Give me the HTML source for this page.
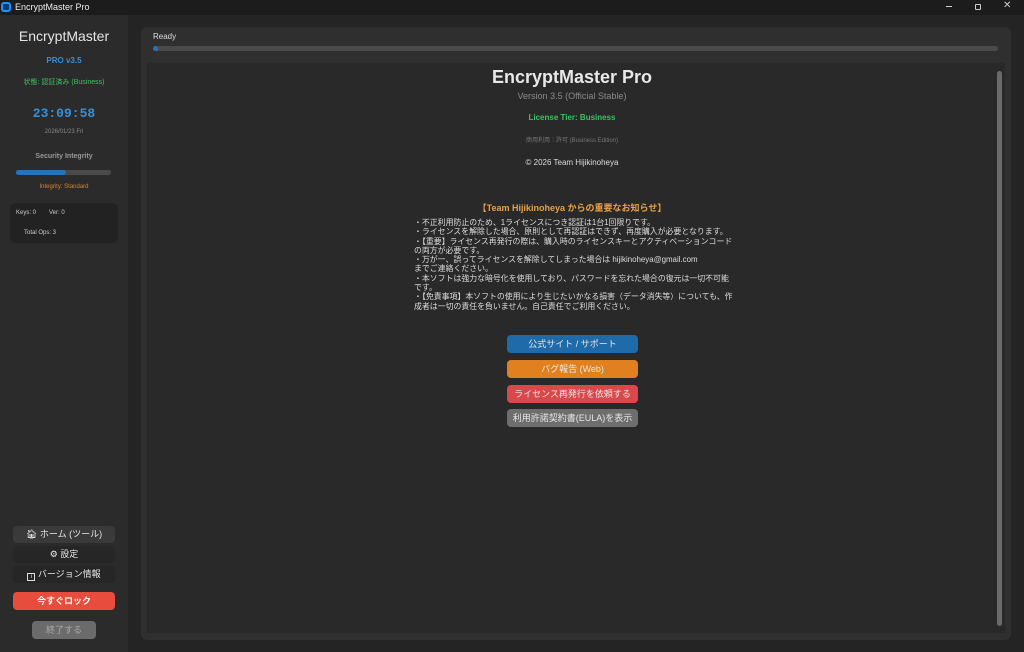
<!DOCTYPE html>
<html><head><meta charset="utf-8"><style>
*{margin:0;padding:0;box-sizing:border-box}
body{width:1024px;height:652px;background:#242424;font-family:"Liberation Sans","Noto Sans CJK JP",sans-serif;position:relative;overflow:hidden;color:#ddd}
.abs{position:absolute}
.c{text-align:center}
#tb{left:0;top:0;width:1024px;height:15px;background:#1c1c1c}
#sb{left:0;top:15px;width:128px;height:637px;background:#2b2b2b}
.btn{position:absolute;border-radius:4px;text-align:center;font-size:9px;color:#e8e8e8}
</style></head><body>
<div id="tb" class="abs">
 <div class="abs" style="left:1px;top:2px;width:10px;height:10px;border:2px solid #1e90ff;border-radius:3px;background:#0b3d6b"></div>
 <div class="abs" style="left:15px;top:2px;font-size:9px;color:#eee">EncryptMaster Pro</div>
 <div class="abs" style="left:946px;top:6px;width:6px;height:1px;background:#ccc"></div>
 <div class="abs" style="left:975px;top:4px;width:6px;height:6px;border:1.5px solid #ccc;border-radius:1px"></div>
 <div class="abs" style="left:1003px;top:0px;font-size:10px;color:#ccc">✕</div>
</div>
<div id="sb" class="abs">
 <div class="abs c" style="left:0;top:13px;width:128px;font-size:14px;color:#e6e6e6">EncryptMaster</div>
 <div class="abs c" style="left:0;top:41px;width:128px;font-size:8px;color:#3a8fd6;font-weight:bold">PRO v3.5</div>
 <div class="abs c" style="left:0;top:62px;width:128px;font-size:7px;color:#3cc35f">状態: 認証済み (Business)</div>
 <div class="abs c" style="left:0;top:91px;width:128px;font-size:13px;color:#3a8fd6;font-weight:bold;font-family:'Liberation Mono',monospace">23:09:58</div>
 <div class="abs c" style="left:0;top:114px;width:128px;font-size:6px;color:#888">2026/01/23 Fri</div>
 <div class="abs c" style="left:0;top:138px;width:128px;font-size:7px;color:#999;font-weight:bold">Security Integrity</div>
 <div class="abs" style="left:16px;top:155px;width:95px;height:5px;background:#4a4a4a;border-radius:3px"><div style="width:50px;height:5px;background:#2a72b5;border-radius:3px"></div></div>
 <div class="abs c" style="left:0;top:169px;width:128px;font-size:6px;color:#d9822b">Integrity: Standard</div>
 <div class="abs" style="left:10px;top:188px;width:108px;height:40px;background:#222;border-radius:5px;font-size:6px;color:#ccc">
  <div class="abs" style="left:6px;top:7px">Keys: 0</div><div class="abs" style="left:39px;top:7px">Ver: 0</div>
  <div class="abs" style="left:14px;top:27px">Total Ops: 3</div></div>
 <div class="btn" style="left:13px;top:511px;width:102px;height:17px;line-height:17px;background:#3a3a3a">🏠︎ ホーム (ツール)</div>
 <div class="btn" style="left:13px;top:531px;width:102px;height:17px;line-height:17px;background:#262626">⚙ 設定</div>
 <div class="btn" style="left:13px;top:551px;width:102px;height:17px;line-height:17px;background:#262626"><span style="display:inline-block;width:8px;height:8px;border:1px solid #ddd;font-size:6px;line-height:6px;vertical-align:-1px">i</span> バージョン情報</div>
 <div class="btn" style="left:13px;top:577px;width:102px;height:18px;line-height:18px;background:#e74c3c;font-weight:bold;color:#fff">今すぐロック</div>
 <div class="btn" style="left:32px;top:606px;width:64px;height:18px;line-height:18px;background:#6b6b6b;color:#aaa">終了する</div>
</div>
<div class="abs" style="left:141px;top:27px;width:870px;height:613px;background:#2f2f2f;border-radius:6px"></div>
<div class="abs" style="left:153px;top:32px;font-size:8px;color:#ddd">Ready</div>
<div class="abs" style="left:153px;top:46px;width:845px;height:5px;background:#4a4a4a;border-radius:3px"><div style="width:5px;height:5px;background:#2a72b5;border-radius:3px"></div></div>
<div class="abs" style="left:147px;top:63px;width:858px;height:570px;background:#292929"></div>
<div class="abs" style="left:997px;top:71px;width:5px;height:555px;background:#6a6a6a;border-radius:3px"></div>
<div class="abs c" style="left:147px;top:67px;width:850px;font-size:18px;font-weight:bold;color:#e8e8e8">EncryptMaster Pro</div>
<div class="abs c" style="left:147px;top:91px;width:850px;font-size:9px;color:#8a8a8a">Version 3.5 (Official Stable)</div>
<div class="abs c" style="left:147px;top:113px;width:850px;font-size:8px;color:#3cc35f;font-weight:bold">License Tier: Business</div>
<div class="abs c" style="left:147px;top:135px;width:850px;font-size:6px;color:#777">商用利用：許可 (Business Edition)</div>
<div class="abs c" style="left:147px;top:158px;width:850px;font-size:8px;color:#ddd">© 2026 Team Hijikinoheya</div>
<div class="abs c" style="left:147px;top:201px;width:850px;font-size:9px;color:#e8a04a;font-weight:bold">【Team Hijikinoheya からの重要なお知らせ】</div>
<div class="abs" style="left:414px;top:218px;width:322px;font-size:7.9px;line-height:9.3px;color:#ddd">
・不正利用防止のため、1ライセンスにつき認証は1台1回限りです。<br>
・ライセンスを解除した場合、原則として再認証はできず、再度購入が必要となります。<br>
・【重要】ライセンス再発行の際は、購入時のライセンスキーとアクティベーションコードの両方が必要です。<br>
・万が一、誤ってライセンスを解除してしまった場合は hijikinoheya@gmail.com<br>までご連絡ください。<br>
・本ソフトは強力な暗号化を使用しており、パスワードを忘れた場合の復元は一切不可能です。<br>
・【免責事項】本ソフトの使用により生じたいかなる損害（データ消失等）についても、作成者は一切の責任を負いません。自己責任でご利用ください。</div>
<div class="btn" style="left:507px;top:335px;width:131px;height:18px;line-height:18px;background:#1f6aa8">公式サイト / サポート</div>
<div class="btn" style="left:507px;top:360px;width:131px;height:18px;line-height:18px;background:#e0801f">バグ報告 (Web)</div>
<div class="btn" style="left:507px;top:385px;width:131px;height:18px;line-height:18px;background:#d9484b">ライセンス再発行を依頼する</div>
<div class="btn" style="left:507px;top:409px;width:131px;height:18px;line-height:18px;background:#6e6e6e">利用許諾契約書(EULA)を表示</div>
</body></html>
